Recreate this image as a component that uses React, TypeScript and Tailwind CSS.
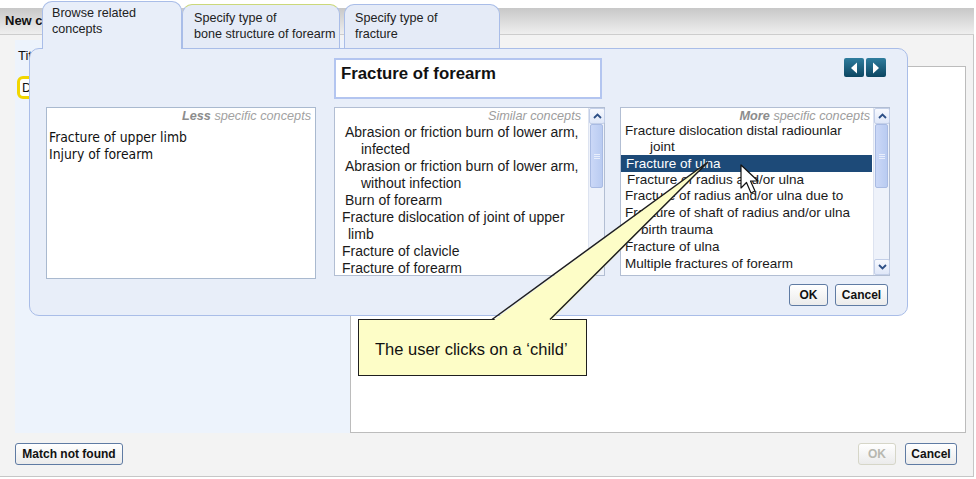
import React from "react";

const arial = "font-['Liberation_Sans',Arial,sans-serif]";
const tahoma = "font-['DejaVu_Sans_Condensed','DejaVu_Sans',sans-serif]";

function Scrollbar({ down }: { down?: boolean }) {
  return (
    <div className="w-[16px] h-full flex flex-col bg-[#eef2fa] border-l border-[#dde3f0]">
      <div className="h-[16px] w-[16px] bg-gradient-to-b from-[#f7f9fe] to-[#dfe7f8] border border-[#c3cfe8] rounded-[2px] flex items-center justify-center">
        <svg width="9" height="6" viewBox="0 0 9 6">
          <path d="M1 5 L4.5 1.5 L8 5" stroke="#2d4f86" strokeWidth="1.8" fill="none" />
        </svg>
      </div>
      <div className="h-[64px] mx-[1px] bg-gradient-to-r from-[#cbd8f7] to-[#b9cbf1] border border-[#a9bbe3] rounded-[2px] flex items-center justify-center">
        <div className="flex flex-col gap-[1px]">
          <div className="w-[6px] h-[1px] bg-[#e8eefc]" />
          <div className="w-[6px] h-[1px] bg-[#e8eefc]" />
          <div className="w-[6px] h-[1px] bg-[#e8eefc]" />
        </div>
      </div>
      <div className="flex-1" />
      {down && (
        <div className="h-[16px] w-[16px] bg-gradient-to-b from-[#f7f9fe] to-[#dfe7f8] border border-[#c3cfe8] rounded-[2px] flex items-center justify-center">
          <svg width="9" height="6" viewBox="0 0 9 6">
            <path d="M1 1 L4.5 4.5 L8 1" stroke="#2d4f86" strokeWidth="1.8" fill="none" />
          </svg>
        </div>
      )}
    </div>
  );
}

type Line = { t: string; x: number; h?: number; sel?: boolean };

function Btn({ children, w, disabled }: { children: React.ReactNode; w: number; disabled?: boolean }) {
  return (
    <div
      className={`${arial} h-[22px] flex items-center justify-center rounded-[3px] border text-[12px] font-bold bg-gradient-to-b from-[#ffffff] to-[#ebebeb] ${
        disabled ? "border-[#d6d6c8] text-[#b8b8b0]" : "border-[#5f7ba3] text-[#111]"
      }`}
      style={{ width: w }}
    >
      {children}
    </div>
  );
}

export default function App() {
  const list2: Line[] = [
    { t: "Abrasion or friction burn of lower arm,", x: 10 },
    { t: "infected", x: 26 },
    { t: "Abrasion or friction burn of lower arm,", x: 10 },
    { t: "without infection", x: 26 },
    { t: "Burn of forearm", x: 10 },
    { t: "Fracture dislocation of joint of upper", x: 7 },
    { t: "limb", x: 13 },
    { t: "Fracture of clavicle", x: 7 },
    { t: "Fracture of forearm", x: 7 },
  ];
  const list3: Line[] = [
    { t: "Fracture dislocation distal radiounlar", x: 4, h: 15 },
    { t: "joint", x: 29, h: 17 },
    { t: "Fracture of ulna", x: 5, h: 17, sel: true },
    { t: "Fracture of radius and/or ulna", x: 6, h: 16 },
    { t: "Fracture of radius and/or ulna due to", x: 4, h: 16 },
    { t: "Fracture of shaft of radius and/or ulna", x: 4, h: 17 },
    { t: "birth trauma", x: 20, h: 18 },
    { t: "Fracture of ulna", x: 4, h: 16 },
    { t: "Multiple fractures of forearm", x: 4, h: 17 },
  ];

  return (
    <div className={`${arial} relative w-[976px] h-[479px] overflow-hidden bg-white text-[#111]`}>
      {/* Base page */}
      <div className="h-[8px]" />
      <div className="w-[974px] h-[27px] bg-gradient-to-b from-[#c8c8c8] to-[#efefef] border-b border-[#cdcdcd] flex items-center pl-[5px] text-[13px] font-bold">
        <div className="w-[37px] overflow-hidden whitespace-nowrap">New concept</div>
      </div>
      <div className="w-[974px] h-[442px] bg-[#f3f3f3] border-r border-b border-[#c6c6c6] flex flex-col">
        <div className="flex h-[398px] pt-[5px]">
          <div className="ml-[15px] w-[335px] bg-[#edf3fc] flex flex-col">
            <div className="pl-[3px] pt-[8px] text-[13px] leading-[16px]">Title</div>
            <div className="ml-[2px] mt-[12px] w-[300px] h-[23px] rounded-[6px] border-[3px] border-[#f2d600] bg-white pl-[2px] text-[13px] leading-[17px]">
              Dislocation
            </div>
          </div>
          <div className="mt-[26px] w-[616px] bg-white border border-[#bcbcbc]" />
        </div>
        <div className="flex items-start mt-[10px] px-[15px]">
          <Btn w={108}>Match not found</Btn>
          <div className="ml-auto flex gap-[9px] mr-[1px]">
            <Btn w={38} disabled>
              OK
            </Btn>
            <Btn w={52}>Cancel</Btn>
          </div>
        </div>
      </div>

      {/* Overlay dialog */}
      <div className="absolute left-[42px] top-[1px] flex items-start z-20 text-[12.6px] leading-[16px] text-[#222]">
        <div className="w-[140px] h-[48px] bg-[#e8eef9] border border-b-0 border-[#a9bde8] rounded-t-[10px] pl-[9px] pt-[3px]">
          Browse related
          <br />
          concepts
        </div>
        <div className="mt-[3px] w-[158px] h-[44px] bg-[#e5ebf7] border border-b-0 border-[#a9bde8] border-t-[#cbd87a] rounded-t-[10px] pl-[11px] pt-[5px]">
          Specify type of
          <br />
          bone structure of forearm
        </div>
        <div className="mt-[3px] ml-[4px] w-[156px] h-[44px] bg-[#e5ebf7] border border-b-0 border-[#a9bde8] rounded-t-[10px] pl-[10px] pt-[5px]">
          Specify type of
          <br />
          fracture
        </div>
      </div>

      <div className="absolute left-[29px] top-[48px] w-[879px] h-[268px] bg-[#e8eef9] border border-[#a9bde8] rounded-[10px] z-10 flex flex-col">
        <div className="flex items-start mt-[9px]">
          <div className="ml-[304px] w-[268px] h-[41px] bg-white border-2 border-[#b3c5f0] pl-[5px] pt-[4px] text-[16.8px] leading-[20px] font-bold">
            Fracture of forearm
          </div>
          <div className="ml-auto mr-[21px] flex gap-[2px]">
            <div className="w-[20px] h-[19px] rounded-[2px] bg-gradient-to-b from-[#2f7d9e] to-[#0b4662] flex items-center justify-center">
              <svg width="8" height="12" viewBox="0 0 8 12">
                <path d="M7 0.5 L1 6 L7 11.5 Z" fill="white" />
              </svg>
            </div>
            <div className="w-[20px] h-[19px] rounded-[2px] bg-gradient-to-b from-[#2f7d9e] to-[#0b4662] flex items-center justify-center">
              <svg width="8" height="12" viewBox="0 0 8 12">
                <path d="M1 0.5 L7 6 L1 11.5 Z" fill="white" />
              </svg>
            </div>
          </div>
        </div>

        <div className="flex items-start mt-[8px] h-[172px]">
          {/* List 1 */}
          <div className="ml-[16px] w-[270px] h-[172px] bg-white border border-[#a9b9cf] flex flex-col">
            <div className="h-[16px] pr-[4px] text-right text-[12.7px] leading-[17px] italic text-[#a2a2a2]">
              <span className="font-bold text-[#8c8c8c]">Less</span> specific concepts
            </div>
            <div className={`${tahoma} pl-[2px] pt-[5px] text-[13.8px] leading-[17px] text-[#111]`}>
              <div>Fracture of upper limb</div>
              <div>Injury of forearm</div>
            </div>
          </div>

          {/* List 2 */}
          <div className="ml-[18px] w-[271px] h-[169px] bg-white border border-[#b2bed3] flex">
            <div className="flex-1 overflow-hidden flex flex-col">
              <div className="h-[16px] pr-[7px] text-right text-[12.7px] leading-[17px] italic text-[#9d9d9d]">
                Similar concepts
              </div>
              {list2.map((l, i) => (
                <div
                  key={i}
                  className="h-[17px] leading-[17px] text-[14px] whitespace-nowrap text-[#1a1a1a]"
                  style={{ paddingLeft: l.x }}
                >
                  {l.t}
                </div>
              ))}
            </div>
            <Scrollbar />
          </div>

          {/* List 3 */}
          <div className="ml-[15px] w-[270px] h-[169px] bg-white border border-[#b2bed3] flex">
            <div className="flex-1 overflow-hidden flex flex-col">
              <div className="h-[15px] pr-[3px] text-right text-[12.7px] leading-[17px] italic text-[#9d9d9d]">
                <span className="font-bold text-[#8c8c8c]">More</span> specific concepts
              </div>
              {list3.map((l, i) => (
                <div
                  key={i}
                  className={`text-[13.5px] whitespace-nowrap ${
                    l.sel ? "bg-[#1d4a78] text-white mr-[1px]" : "text-[#1a1a1a]"
                  }`}
                  style={{ paddingLeft: l.x, height: l.h, lineHeight: `${l.h}px` }}
                >
                  {l.t}
                </div>
              ))}
            </div>
            <Scrollbar down />
          </div>
        </div>

        <div className="flex justify-end gap-[7px] mr-[19px] mt-[5px]">
          <Btn w={39}>OK</Btn>
          <Btn w={53}>Cancel</Btn>
        </div>
      </div>

      {/* Callout */}
      <div className="absolute left-[358px] top-[319px] w-[229px] h-[57px] bg-[#fdfdc7] border-[1.5px] border-[#1f1f1f] z-30 pl-[16px] pt-[19px] text-[16.5px] leading-[20px] text-[#111]">
        The user clicks on a ‘child’
      </div>
      <svg className="absolute left-0 top-0 z-40 pointer-events-none" width="976" height="479" viewBox="0 0 976 479">
        <polygon points="492,321.5 708,162 550,321.5" fill="#fdfdc7" />
        <polyline points="492,319.5 708,162 550,319.5" fill="none" stroke="#1f1f1f" strokeWidth="1.5" />
        <path
          d="M741 165 L741 188 L746.5 182.5 L751 193 L755 191 L750.5 181 L758 181 Z"
          fill="white"
          stroke="#111"
          strokeWidth="1.2"
          strokeLinejoin="round"
        />
      </svg>
    </div>
  );
}
